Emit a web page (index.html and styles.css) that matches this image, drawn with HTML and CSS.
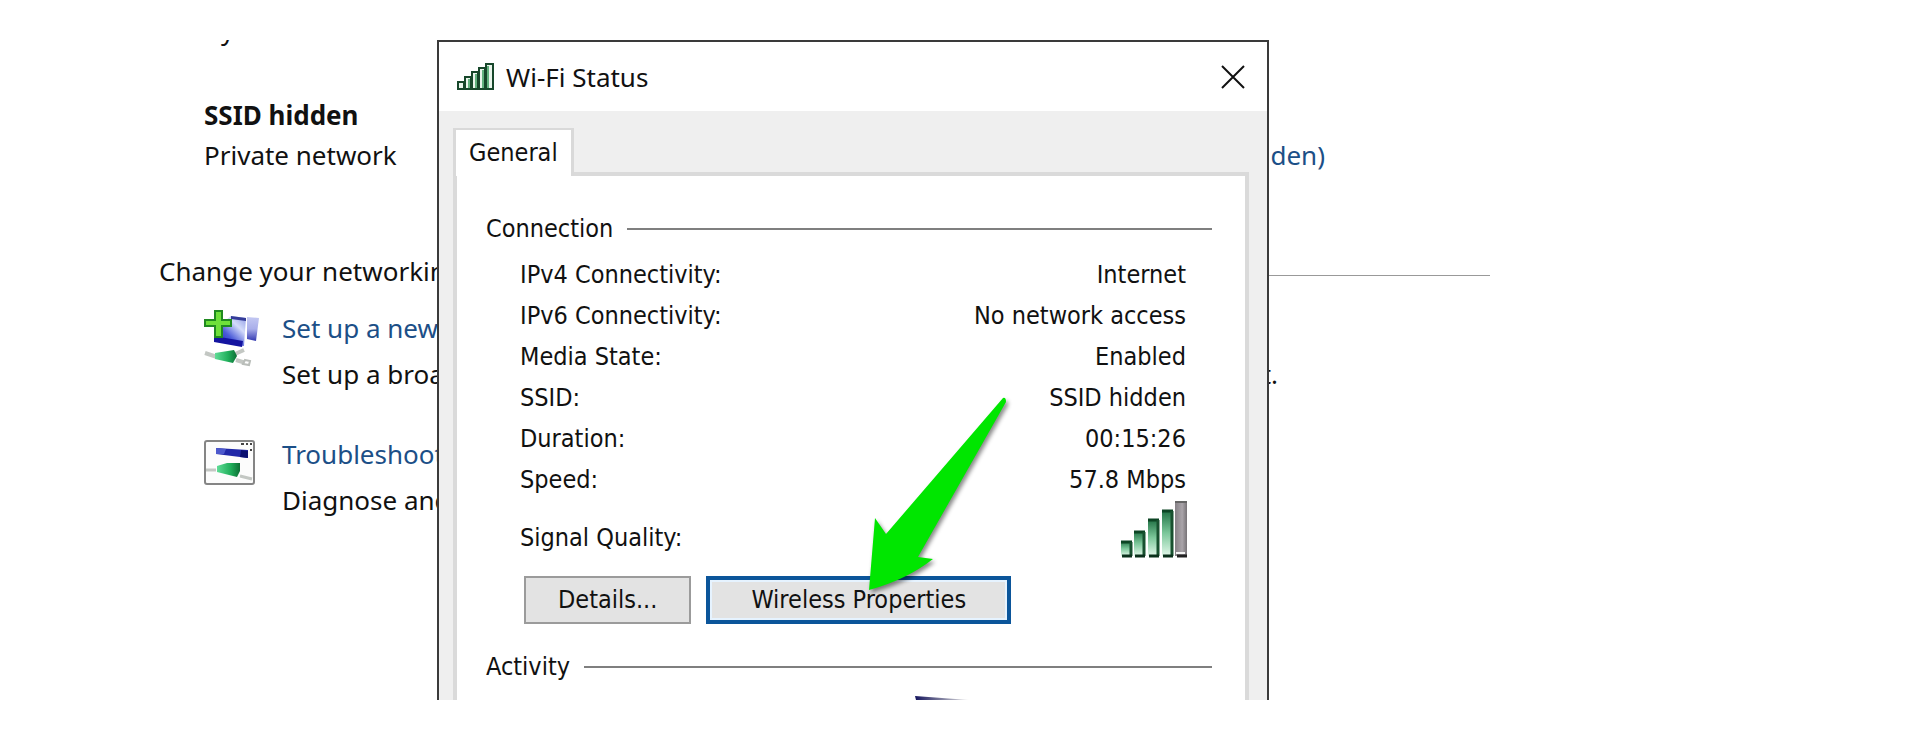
FILE: index.html
```html
<!DOCTYPE html>
<html lang="en">
<head>
<meta charset="utf-8">
<title>Wi-Fi Status</title>
<link rel="stylesheet" href="styles.css">
</head>
<body>
<main class="desktop">
  <section class="center">
    <p class="cut-line">y</p>
    <div class="network">
      <h2 class="network-name">SSID hidden</h2>
      <div class="network-row"><span>Private network</span><a class="link" href="#">den)</a></div>
    </div>
    <h3 class="settings-head"><span>Change your networkin</span></h3>
    <div class="task">
      <svg class="task-icon" viewBox="0 0 56 58" aria-hidden="true">
        <defs>
          <linearGradient id="screen" x1="0" y1="1" x2="1" y2="0"><stop offset="0" stop-color="#1018a8"/><stop offset=".4" stop-color="#4a5ad8"/><stop offset=".7" stop-color="#d4dcfa"/><stop offset="1" stop-color="#8c98e4"/></linearGradient>
          <linearGradient id="side" x1="0" y1="0" x2="0" y2="1"><stop offset="0" stop-color="#c3c8f2"/><stop offset=".5" stop-color="#a9aeea"/><stop offset="1" stop-color="#3238b0"/></linearGradient>
          <linearGradient id="plug"><stop offset="0" stop-color="#5fdc96"/><stop offset=".6" stop-color="#1fae5a"/><stop offset="1" stop-color="#0c6e34"/></linearGradient>
        </defs>
        <path d="M43 7l12 1-3 23-9-2z" fill="url(#side)"/>
        <path d="M27 6l15 2-2 28-30-5V20z" fill="url(#screen)"/>
        <path d="M27 6l15 2v3l-15-2z" fill="#343c98"/>
        <path d="M10 26l29 5-1 6-28-5z" fill="#1414a0"/>
        <path d="M1 43l12 4M31 44l9-4M32 50l10 3" stroke="#c3c7c3" stroke-width="4" fill="none"/>
        <path d="M11 43l19-3 3 6-4 7-18-4z" fill="url(#plug)"/>
        <path d="M41 50l5 1-1 4-6-1z" fill="#fff" stroke="#b9bdb9" stroke-width="2"/>
        <path d="M11 1h7v9h9v6h-9v11h-7V16H1v-6h10z" fill="#6fe03a" stroke="#208a20" stroke-width="2"/>
      </svg>
      <div class="task-text">
        <a class="link" href="#">Set up a new</a>
        <p class="task-note"><span>Set up a broa</span><span class="note-end">t.</span></p>
      </div>
    </div>
    <div class="task">
      <svg class="task-icon framed" viewBox="0 0 52 46" aria-hidden="true">
        <rect x="1" y="1" width="49" height="43" rx="2" fill="#fcfcfc" stroke="#858585" stroke-width="2"/>
        <path d="M37 4h3M42 4h2M46 4h2M47 9v2" stroke="#444" stroke-width="2"/>
        <path d="M12 8l32 2v8l-32-4z" fill="#2028a8"/>
        <path d="M12 8l10 1-2 5-8 0z" fill="#4c58cc"/>
        <path d="M37 10l7 1v7l-8-1z" fill="#0a1070"/>
        <path d="M2 30h10M36 36l12 3" stroke="#c3c7c3" stroke-width="3"/>
        <path d="M13 26l10-3 13 0v8l-3 6-20-5z" fill="url(#plug)"/>
      </svg>
      <div class="task-text">
        <a class="link" href="#">Troubleshoot</a>
        <p class="task-note"><span>Diagnose and</span></p>
      </div>
    </div>
  </section>

  <section class="dialog" role="dialog" aria-labelledby="dialog-title">
    <header class="titlebar">
      <svg class="title-icon" viewBox="0 0 37 29" aria-hidden="true">
        <g fill="#eaf5ec" stroke="#17472b" stroke-width="2"><path d="M1 20h6v7H1zM8 15h6v12H8zM15 10h6v17h-6zM22 6h6v21h-6zM29 2h7v25h-7z"/></g>
        <path d="M12 17v9M19 12v14M26 8v18M31 4v22" stroke="#63b27f" stroke-width="2"/>
      </svg>
      <h1 class="title" id="dialog-title">Wi-Fi Status</h1>
      <button class="close" type="button" aria-label="Close">
        <svg class="close-icon" viewBox="0 0 24 24" aria-hidden="true"><path d="M1 1l22 22M23 1L1 23" stroke="#111" stroke-width="2"/></svg>
      </button>
    </header>
    <div class="dialog-body">
      <button class="tab" type="button">General</button>
      <div class="panel">
        <h2 class="group">Connection</h2>
        <dl class="fields">
          <div class="field"><dt>IPv4 Connectivity:</dt><dd>Internet</dd></div>
          <div class="field"><dt>IPv6 Connectivity:</dt><dd>No network access</dd></div>
          <div class="field"><dt>Media State:</dt><dd>Enabled</dd></div>
          <div class="field"><dt>SSID:</dt><dd>SSID hidden</dd></div>
          <div class="field"><dt>Duration:</dt><dd>00:15:26</dd></div>
          <div class="field"><dt>Speed:</dt><dd>57.8 Mbps</dd></div>
          <div class="field signal"><dt>Signal Quality:</dt><dd>
            <svg class="signal-icon" viewBox="0 0 68 58" role="img" aria-label="Four of five bars">
              <defs>
                <linearGradient id="bar" x1="0" y1="0" x2="0" y2="1"><stop offset="0" stop-color="#1d6e41"/><stop offset=".5" stop-color="#7cc79a"/><stop offset="1" stop-color="#e2f8ea"/></linearGradient>
                <linearGradient id="off"><stop offset="0" stop-color="#858085"/><stop offset=".6" stop-color="#aaa5aa"/><stop offset="1" stop-color="#777377"/></linearGradient>
              </defs>
              <g fill="url(#bar)"><path d="M1 41h11v15H1z"/><path d="M14 31h11v25H14z"/><path d="M28 19h11v37H28z"/><path d="M42 10h11v46H42z"/></g>
              <path d="M1 42h11M14 32h11M28 20h11M42 11h11" stroke="#0c4524" stroke-width="3"/>
              <path d="M11 42v14M24 32v24M38 20v36M52 11v45" stroke="#17512f" stroke-width="3"/>
              <path d="M2 56h10M15 56h10M29 56h10M43 56h10" stroke="#0a301b" stroke-width="3"/>
              <path d="M55 1h12v55H55z" fill="url(#off)"/>
              <path d="M55 2h12" stroke="#666" stroke-width="2"/>
              <path d="M57 56h10" stroke="#222" stroke-width="3"/>
              <path d="M56 53h9" stroke="#f4f4f4" stroke-width="2"/>
            </svg>
          </dd></div>
        </dl>
        <div class="actions">
          <button class="button" type="button">Details...</button>
          <button class="button primary" type="button">Wireless Properties</button>
        </div>
        <h2 class="group">Activity</h2>
        <svg class="activity-icon" viewBox="0 0 56 16" aria-hidden="true">
          <defs><linearGradient id="lid"><stop offset="0" stop-color="#15155e"/><stop offset=".4" stop-color="#6a6a90"/><stop offset="1" stop-color="#e6e6e6"/></linearGradient></defs>
          <path d="M2 0l54 4v12H6z" fill="url(#lid)"/>
        </svg>
      </div>
    </div>
    <svg class="arrow" viewBox="0 0 150 206" aria-hidden="true">
      <path d="M9 200L15 128 26 144 143 8q3-1 3 4L58 167 73 169Q46 190 9 200z" fill="#00e600"/>
    </svg>
  </section>
</main>
</body>
</html>
```
FILE: styles.css
```css
* { box-sizing: border-box; }

body {
  margin: 0;
  background: #fff;
  color: #111;
  font: 26px/40px "Noto Sans", "Open Sans", sans-serif;
}

h1, h2, h3, p, dl, dd { margin: 0; font-size: inherit; font-weight: normal; }
button { color: inherit; font: inherit; border-radius: 0; }
svg { display: block; }

.desktop {
  position: relative;
  height: calc(100vh - 80px);
  min-height: 660px;
  margin: 40px 0;
  overflow: hidden;
}

/* Network and Sharing Center, behind the dialog */
.center { padding: 0 426px 0 159px; white-space: nowrap; }
.cut-line { margin-top: -30px; padding-left: 62px; }
.network { padding: 45px 165px 0 45px; }
.network-name { font-weight: bold; }
.network-row { display: flex; justify-content: space-between; }
.link { color: #1c4f87; text-decoration: none; }
.settings-head { display: flex; align-items: center; margin-top: 76px; }
.settings-head::after { content: ""; flex: 1; height: 1px; margin-top: 8px; background: #999; }

.task { display: flex; gap: 22px; margin: 14px 0 34px; padding-left: 45px; line-height: 46px; }
.task-icon { flex: none; width: 56px; height: 58px; margin-top: 5px; }
.task-icon.framed { width: 52px; height: 46px; margin: 9px 4px 0 0; }
.task-text { flex: 1; }
.task-note { display: flex; justify-content: space-between; padding-right: 212px; }

/* Dialog window */
.dialog {
  position: absolute;
  inset: 0 647px 0 437px;
  display: flex;
  flex-direction: column;
  border: 2px solid #3a3a3a;
  border-bottom: 0;
  background: #fff;
  font-family: "DejaVu Sans Condensed", "DejaVu Sans", sans-serif;
  font-size: 25px;
  font-stretch: condensed;
  white-space: nowrap;
}
.titlebar { flex: none; display: flex; align-items: center; gap: 12px; height: 69px; padding: 0 22px 0 18px; }
.title-icon { width: 37px; height: 29px; }
.title { font: 26px/40px "Noto Sans", "Open Sans", sans-serif; }
.close { margin-left: auto; padding: 0; border: 0; background: none; }
.close-icon { width: 24px; height: 24px; }

.dialog-body { flex: 1; display: flex; flex-direction: column; align-items: flex-start; padding: 17px 18px 0 14px; background: #efefef; }
.tab {
  z-index: 1;
  height: 48px;
  margin-bottom: -4px;
  padding: 0 13px;
  border: 3px solid #d9d9d9;
  border-top-width: 2px;
  border-bottom: 0;
  background: #fff;
  line-height: 44px;
}
.panel { flex: 1; align-self: stretch; padding: 33px 33px 0 29px; border: solid #dadada; border-width: 4px 4px 0; background: #fff; }

.group { display: flex; align-items: center; gap: 14px; }
.group::after { content: ""; flex: 1; height: 2px; background: #7f7f7f; }

.fields { padding: 5px 26px 0 34px; line-height: 41px; }
.field { display: flex; justify-content: space-between; align-items: flex-end; }
.signal-icon { width: 68px; height: 58px; margin-right: -2px; }

.actions { display: flex; gap: 15px; padding: 18px 0 23px 38px; }
.button { height: 48px; padding: 0 32px; border: 2px solid #9b9b9b; background: #e3e3e3; line-height: 40px; }
.primary { padding: 0 41px; border: 4px solid #0b559a; box-shadow: inset 0 0 0 2px #e6f3ff; }

.activity-icon { width: 56px; height: 16px; margin: 9px auto 0 427px; }
.arrow { position: absolute; top: 348px; left: 421px; width: 150px; height: 206px; filter: drop-shadow(2px 3px 2px #0007); }
```
